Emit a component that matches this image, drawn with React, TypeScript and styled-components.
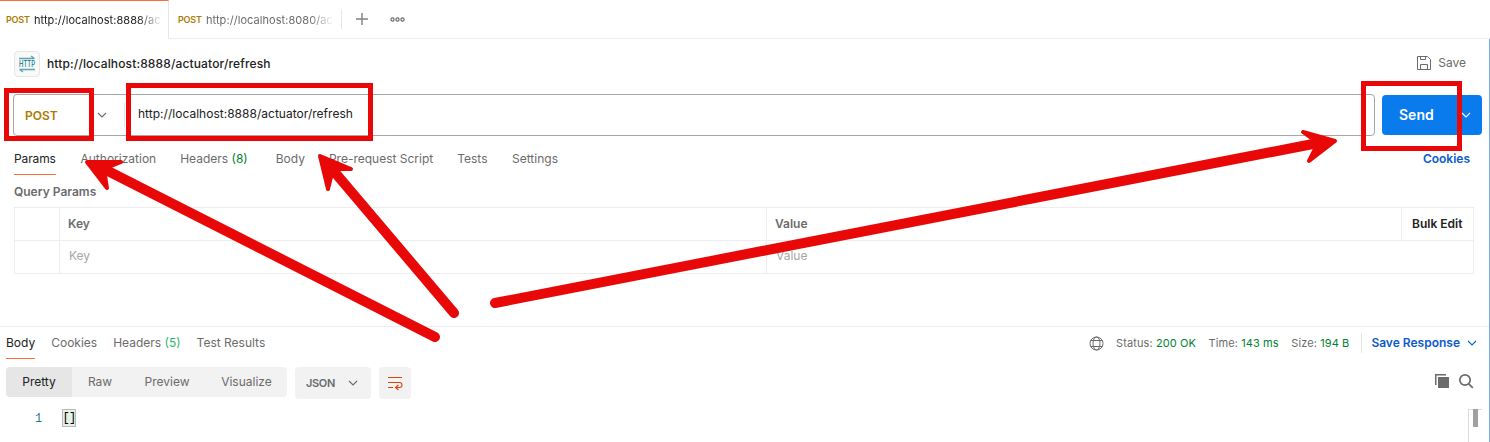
import React from 'react';
import styled, { createGlobalStyle } from 'styled-components';

const Global = createGlobalStyle`
  * { box-sizing: border-box; }
  body { margin: 0; background: #fff; overflow: hidden; }
  svg { display: block; flex: none; overflow: visible; }
`;

const Page = styled.div`
  position: relative;
  width: 1490px;
  height: 442px;
  overflow: hidden;
  background: #fff;
  color: #6b6b6b;
  font: 400 12px/16px Inter, "Liberation Sans", sans-serif;
  white-space: nowrap;
`;

const TabStrip = styled.header`
  display: flex;
  height: 39px;
`;

const Tab = styled.div<{ $active?: boolean }>`
  display: flex;
  width: ${p => (p.$active ? 169 : 172)}px;
  height: 39px;
  padding: ${p => (p.$active ? '11px 0 0 6px' : '12px 0 0 9px')};
  border-top: ${p => (p.$active ? '1px solid #ff6c37' : '0')};
  border-right: ${p => (p.$active ? '1px solid #e6e6e6' : '0')};
  border-bottom: ${p => (p.$active ? '0' : '1px solid #ededed')};
  color: ${p => (p.$active ? '#212121' : '#6b6b6b')};
  font-size: 11px;
`;

const TabMethod = styled.span`
  flex: none;
  width: 28px;
  color: #ad7a03;
  font-size: 9px;
  font-weight: 600;
  letter-spacing: -0.2px;
`;

const TabTitle = styled.span`
  flex: none;
  letter-spacing: 0.06px;
  mask-image: linear-gradient(to right, #000 104px, transparent 128px);
`;

const TabTools = styled.div`
  display: flex;
  flex: 1;
  align-items: center;
  gap: 22px;
  border-bottom: 1px solid #ededed;
`;

const Divider = styled.i<{ $height: number; $before?: number; $after?: number }>`
  flex: none;
  width: 1px;
  height: ${p => p.$height}px;
  margin-left: ${p => p.$before ?? 0}px;
  margin-right: ${p => p.$after ?? 0}px;
  background: #e6e6e6;
`;

const Workspace = styled.main`
  height: 403px;
  border-right: 1px solid #76a5e8;
`;

const TitleRow = styled.div`
  display: flex;
  align-items: center;
  height: 49px;
  padding: 0 23px 0 14px;
`;

const ProtocolBadge = styled.div`
  display: grid;
  place-items: center;
  width: 26px;
  height: 26px;
  border: 1px solid #e6e6e6;
  border-radius: 4px;
  background: #f9f9f9;
`;

const RequestName = styled.h1`
  flex: 1;
  margin: 0 0 0 7px;
  color: #212121;
  font-size: 12px;
  font-weight: 550;
  letter-spacing: 0.14px;
`;

const SaveAction = styled.div`
  display: flex;
  align-items: center;
  gap: 7px;
  margin-top: -1px;
`;

const RequestBar = styled.div`
  display: flex;
  height: 54px;
  padding: 6px 7px 6px 13px;
  gap: 7px;
`;

const UrlField = styled.div`
  display: flex;
  flex: 1;
  align-items: center;
  border: 1px solid #a6a6a6;
  border-radius: 4px;
`;

const Method = styled.strong`
  flex: none;
  width: 83px;
  padding: 2px 0 0 11px;
  color: #ad7a03;
  font-weight: 600;
`;

const Url = styled.span`
  margin: -3px 0 0 13px;
  color: #212121;
  letter-spacing: 0.02px;
`;

const SendButton = styled.button`
  display: flex;
  align-items: center;
  width: 100px;
  height: 40px;
  margin-top: 1px;
  padding: 0 11px 0 17px;
  border: 0;
  border-radius: 4px;
  justify-content: space-between;
  background: #097bed;
  color: #fff;
  font: 600 14px/20px Inter, sans-serif;
`;

const TabList = styled.nav<{ $gap: number }>`
  display: flex;
  gap: ${p => p.$gap}px;
`;

const TabItem = styled.span<{ $active?: boolean; $tight?: boolean; $after?: number }>`
  height: 24px;
  margin-right: ${p => p.$after ?? 0}px;
  border-bottom: 1px solid ${p => (p.$active ? '#ff6c37' : 'transparent')};
  color: ${p => (p.$active ? '#212121' : '#6b6b6b')};
  letter-spacing: ${p => (p.$tight ? '-0.12px' : 'normal')};
`;

const Count = styled.span<{ $light?: boolean }>`
  color: ${p => (p.$light ? '#2fb56a' : '#007f31')};
`;

const RequestTabs = styled.div`
  display: flex;
  justify-content: space-between;
  height: 41px;
  padding: 9px 19px 0 14px;
`;

const LinkText = styled.span`
  color: #0b5bcb;
  font-weight: 600;
`;

const SectionTitle = styled.h2`
  height: 24px;
  margin: 0 0 0 14px;
  padding-top: 1px;
  font-size: 12px;
  font-weight: 600;
  line-height: 16px;
`;

const ParamsTable = styled.div`
  display: grid;
  grid-template-columns: 45px 707px 635px 72px;
  grid-template-rows: 33px 33px;
  width: 1460px;
  margin-left: 14px;
  border: solid #ededed;
  border-width: 1px 0 0 1px;
`;

const Cell = styled.div<{ $kind?: 'head' | 'hint' | 'link'; $open?: boolean }>`
  padding: ${p => (p.$kind === 'hint' ? '7px 9px' : p.$kind === 'link' ? '8px 10px' : '8px')};
  border-bottom: 1px solid #ededed;
  border-right: ${p => (p.$open ? '0' : '1px solid #ededed')};
  color: ${p => (p.$kind === 'hint' ? '#a6a6a6' : p.$kind === 'link' ? '#212121' : '#6b6b6b')};
  font-weight: ${p => (p.$kind === 'hint' ? 400 : 600)};
`;

const ResponsePanel = styled.section`
  margin-top: 52px;
  border-top: 1px solid #ededed;
`;

const ResponseHeader = styled.div`
  display: flex;
  justify-content: space-between;
  height: 40px;
  padding: 8px 12px 0 6px;
`;

const ResponseMeta = styled.div`
  display: flex;
  align-items: center;
  height: 16px;
  font-size: 11px;
`;

const Stats = styled.div`
  display: flex;
  gap: 12.5px;
  margin: 0 12px;
  letter-spacing: 0.1px;
`;

const SaveResponse = styled(LinkText)`
  margin-right: 7px;
  font-size: 12px;
`;

const FormatBar = styled.div`
  display: flex;
  height: 42px;
  padding: 0 15px 0 6px;
`;

const Segments = styled.div`
  display: flex;
  height: 30px;
  border-radius: 4px;
  overflow: hidden;
  background: #f2f2f2;
`;

const Segment = styled.span<{ $width: number; $active?: boolean }>`
  width: ${p => p.$width}px;
  background: ${p => (p.$active ? '#e6e6e6' : 'transparent')};
  color: ${p => (p.$active ? '#212121' : '#6b6b6b')};
  line-height: 30px;
  text-align: center;
`;

const Chip = styled.div<{ $width: number }>`
  display: flex;
  align-items: center;
  justify-content: center;
  gap: 13px;
  width: ${p => p.$width}px;
  height: 32px;
  margin-left: 8px;
  padding-right: ${p => (p.$width > 40 ? 2 : 0)}px;
  border-radius: 4px;
  background: #f2f2f2;
  font-size: 11px;
  font-weight: 600;
  letter-spacing: -0.3px;
`;

const BodyTools = styled.div`
  display: flex;
  gap: 9px;
  margin: 7px 0 0 auto;
`;

const Editor = styled.div`
  display: flex;
  height: 33px;
  color: #237893;
  font: 12px/18px "Liberation Mono", monospace;
`;

const LineNumber = styled.span`
  width: 62px;
  padding: 1px 0 0 35px;
`;

const BracketPair = styled.span`
  width: 14px;
  height: 18px;
  border: 1px solid #b9b9b9;
  background: #e7f0e6;
  color: #000;
  font-size: 12px;
  line-height: 17px;
  letter-spacing: -0.8px;
  text-indent: -0.5px;
`;

const Scrollbar = styled.div`
  width: 14px;
  margin: 0 7px 0 auto;
  padding-left: 4px;
  border: solid #dcdcdc;
  border-width: 1px 0 0 1px;
`;

const ScrollThumb = styled.div`
  width: 5px;
  height: 18px;
  margin-top: -1px;
  background: #a0a0a0;
`;

const Annotations = styled.svg`
  position: absolute;
  inset: 0;
  pointer-events: none;
`;

const Chevron = ({ color = '#6b6b6b' }: { color?: string }) => (
  <svg width="10" height="6" fill="none" stroke={color} strokeWidth="1.1">
    <path d="M1 1l4 4 4-4" />
  </svg>
);

const HttpIcon = () => (
  <svg width="18" height="18" fill="none" stroke="#5aa5ae" strokeWidth="1.3">
    <path d="M1 3.500h15.500M13 1l3.500 2.500M1.500 14.500h15.500M1.500 14.500l3.500 2.500" />
    <text x="1" y="12" textLength="16" lengthAdjust="spacingAndGlyphs" fill="#0b7285" stroke="none" fontSize="8.500" fontWeight="500">HTTP</text>
  </svg>
);

const PlusIcon = () => (
  <svg width="12" height="12" stroke="#808080" strokeWidth="1.400"><path d="M0 6h12M6 0v12" /></svg>
);

const MoreIcon = () => (
  <svg width="15" height="5" fill="none" stroke="#6b6b6b" strokeWidth="1.200">
    <circle cx="2.500" cy="2.500" r="1.600" /><circle cx="7.500" cy="2.500" r="1.600" /><circle cx="12.500" cy="2.500" r="1.600" />
  </svg>
);

const SaveIcon = () => (
  <svg width="14" height="14" fill="none" stroke="#6b6b6b">
    <path d="M.5.5h10l3 3v10H.5zM3.500 .5v3h5v-3M3.500 13.500v-5h7v5" />
  </svg>
);

const GlobeIcon = () => (
  <svg width="15" height="15" fill="none" stroke="#6b6b6b">
    <circle cx="7.500" cy="7.500" r="6.500" /><ellipse cx="7.500" cy="7.500" rx="3.500" ry="6.500" />
    <path d="M1.500 4.500h12M1.500 10.500h12" />
  </svg>
);

const WrapIcon = () => (
  <svg width="15" height="14" fill="none" stroke="#d9450f" strokeWidth="1.100">
    <path d="M0 1.500h14M0 6.500h11.500a2.500 2.500 0 0 1 0 5H8M0 11.500h5M10.500 9l-3 2.500 3 2.500" />
  </svg>
);

const CopyIcon = () => (
  <svg width="15" height="15" fill="#6b6b6b">
    <path d="M0 0h11v1.500H1.500V11H0z" /><rect x="3" y="3" width="11" height="11" />
  </svg>
);

const SearchIcon = () => (
  <svg width="15" height="15" fill="none" stroke="#6b6b6b" strokeWidth="1.700">
    <circle cx="6" cy="6" r="5.200" /><path d="M9.800 9.800l4 4" />
  </svg>
);

export default function App() {
  return (
    <Page>
      <Global />
      <TabStrip>
        <Tab $active><TabMethod>POST</TabMethod><TabTitle>http://localhost:8888/ac</TabTitle></Tab>
        <Tab><TabMethod>POST</TabMethod><TabTitle>http://localhost:8080/ac</TabTitle></Tab>
        <TabTools><Divider $height={20} $after={-8} /><PlusIcon /><MoreIcon /></TabTools>
      </TabStrip>
      <Workspace>
        <TitleRow>
          <ProtocolBadge><HttpIcon /></ProtocolBadge>
          <RequestName>http://localhost:8888/actuator/refresh</RequestName>
          <SaveAction><SaveIcon />Save</SaveAction>
        </TitleRow>
        <RequestBar>
          <UrlField>
            <Method>POST</Method>
            <Chevron />
            <Divider $height={24} $before={17} />
            <Url>http://localhost:8888/actuator/refresh</Url>
          </UrlField>
          <SendButton>Send<Chevron color="#fff" /></SendButton>
        </RequestBar>
        <RequestTabs>
          <TabList $gap={24}>
            <TabItem $active $tight $after={0.7}>Params</TabItem>
            <TabItem>Authorization</TabItem>
            <TabItem $after={4}>Headers <Count>(8)</Count></TabItem>
            <TabItem>Body</TabItem>
            <TabItem>Pre-request Script</TabItem>
            <TabItem $after={0.5}>Tests</TabItem>
            <TabItem>Settings</TabItem>
          </TabList>
          <LinkText>Cookies</LinkText>
        </RequestTabs>
        <SectionTitle>Query Params</SectionTitle>
        <ParamsTable>
          <Cell /><Cell $kind="head">Key</Cell><Cell $kind="head">Value</Cell><Cell $kind="link">Bulk Edit</Cell>
          <Cell /><Cell $kind="hint">Key</Cell><Cell $kind="hint" $open>Value</Cell><Cell />
        </ParamsTable>
        <ResponsePanel>
          <ResponseHeader>
            <TabList $gap={16}>
              <TabItem $active>Body</TabItem>
              <TabItem>Cookies</TabItem>
              <TabItem>Headers <Count $light>(5)</Count></TabItem>
              <TabItem>Test Results</TabItem>
            </TabList>
            <ResponseMeta>
              <GlobeIcon />
              <Stats>
                <span>Status: <Count>200 OK</Count></span>
                <span>Time: <Count>143 ms</Count></span>
                <span>Size: <Count>194 B</Count></span>
              </Stats>
              <Divider $height={20} $after={9} />
              <SaveResponse>Save Response</SaveResponse>
              <Chevron color="#0265d2" />
            </ResponseMeta>
          </ResponseHeader>
          <FormatBar>
            <Segments>
              <Segment $width={66} $active>Pretty</Segment>
              <Segment $width={56}>Raw</Segment>
              <Segment $width={78}>Preview</Segment>
              <Segment $width={81}>Visualize</Segment>
            </Segments>
            <Chip $width={76}>JSON<Chevron /></Chip>
            <Chip $width={32}><WrapIcon /></Chip>
            <BodyTools><CopyIcon /><SearchIcon /></BodyTools>
          </FormatBar>
          <Editor>
            <LineNumber>1</LineNumber>
            <BracketPair>[]</BracketPair>
            <Scrollbar><ScrollThumb /></Scrollbar>
          </Editor>
        </ResponsePanel>
      </Workspace>
      <Annotations width="1490" height="442" fill="none" stroke="#e90808" strokeLinecap="round" strokeLinejoin="round">
        <g strokeWidth="5" strokeLinejoin="miter">
          <rect x="6.500" y="90.500" width="85" height="48" />
          <rect x="128.500" y="85.500" width="242" height="53" />
          <rect x="1363.500" y="83.500" width="96" height="65" />
        </g>
        <g strokeWidth="10">
          <path d="M435 337L106 170M454 313L332 169M495 303L1318 143" />
        </g>
        <g fill="#e90808" strokeWidth="4">
          <path d="M87 162L121 162L104 169L107 188Z" />
          <path d="M320 156L351 169L333 169L328 189Z" />
          <path d="M1335 141L1303 132L1318 143L1309 161Z" />
        </g>
      </Annotations>
    </Page>
  );
}
